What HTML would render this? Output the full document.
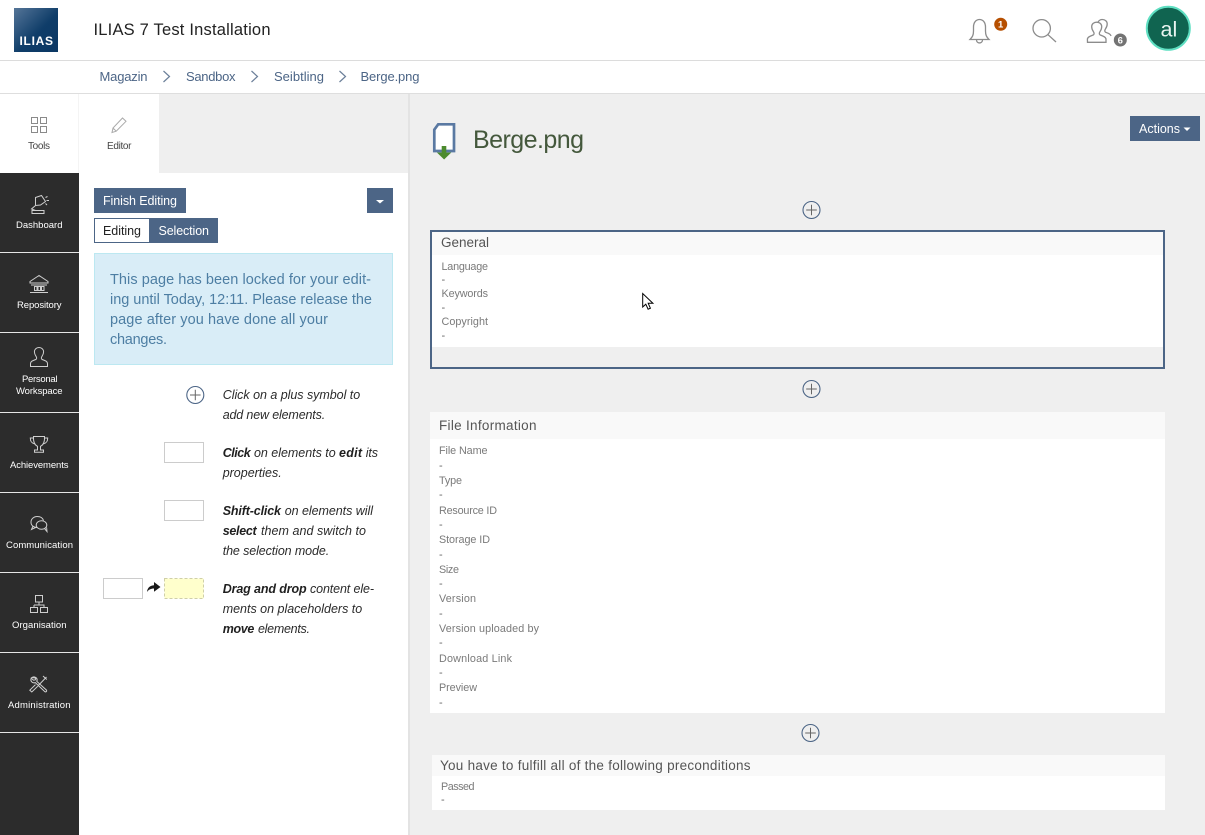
<!DOCTYPE html>
<html lang="en">
<head>
<meta charset="utf-8">
<title>Berge.png</title>
<style>
html,body{margin:0;padding:0;background:#efefef;width:1205px;height:835px;overflow:hidden}
svg{display:block;position:absolute;left:0;top:0}
text{font-family:"Liberation Sans",sans-serif;white-space:pre}
.crumb{font-size:13px;fill:#4c6586}
.nav{font-size:9.5px;fill:#fff}
.tab{font-size:10px;fill:#444}
.it{font-size:12.5px;font-style:italic;fill:#2b2b2b}
.itb{font-size:12.5px;font-style:italic;font-weight:bold;fill:#1f1f1f}
.info{font-size:14.5px;fill:#4d7ea3}
.btn{font-size:12.5px;fill:#fff}
.h{font-size:13.5px;fill:#555}
.l{font-size:10.8px;fill:#7a7a7a}
.d{font-size:11px;fill:#666}
.ic{fill:none;stroke:#cfcfcf;stroke-width:1}
.hic{fill:none;stroke:#8c8c8c;stroke-width:1.3}
</style>
</head>
<body>
<svg width="1205" height="835" viewBox="0 0 1205 835" xmlns="http://www.w3.org/2000/svg">
<defs>
<linearGradient id="lg" x1="0" y1="0" x2="1" y2="1"><stop offset="0" stop-color="#557598"/><stop offset=".55" stop-color="#0f3d69"/><stop offset="1" stop-color="#0b3763"/></linearGradient>
</defs>
<rect width="1205" height="835" fill="#efefef"/>

<!-- header -->
<rect width="1205" height="60" fill="#fff"/>
<rect y="60" width="1205" height="1" fill="#dcdcdc"/>
<rect y="61" width="1205" height="32" fill="#fff"/>
<rect y="93" width="1205" height="1" fill="#dedede"/>
<rect x="14" y="8" width="44" height="44" fill="url(#lg)"/>
<text x="19.5" y="45" font-size="12" font-weight="bold" fill="#fff" textLength="33.5">ILIAS</text>
<text x="93.5" y="35" font-size="16.5" fill="#222" textLength="177">ILIAS 7 Test Installation</text>

<!-- bell -->
<path class="hic" d="M970 39.500h19c-2.500-2.500-3.500-4.500-3.500-8.500v-4c0-4.500-2.500-7.500-6-7.500s-6 3-6 7.500v4c0 4-1 6-3.500 8.500zM976.500 39.700c0 4.300 6 4.300 6 0"/>
<circle cx="1000.700" cy="24.300" r="6.500" fill="#b64f00"/>
<text x="1000.700" y="27.700" font-size="9.500" font-weight="bold" fill="#fff" text-anchor="middle">1</text>
<!-- search -->
<circle class="hic" cx="1041.700" cy="28.300" r="8.700"/>
<path class="hic" d="M1048 34.700l8 7.300"/>
<!-- users -->
<path class="hic" d="M1087.500 42.300h18.500v-2.800c0-1.800-1-2.600-3-3.400l-3-1.200c-.8-.6-.8-2 0-3.300 1.200-1.700 1.700-3.400 1.700-5 0-2.600-2.200-4.400-5-4.400s-5 1.800-5 4.400c0 1.600.5 3.300 1.700 5 .8 1.300.8 2.700 0 3.300l-3 1.200c-2 .8-3 1.600-3 3.400z"/>
<path class="hic" d="M1098 22c1-1.600 2.600-2.500 4.300-2.500 2.800 0 4.900 1.800 4.900 4.400 0 1.600-.5 3.300-1.700 5-.8 1.300-.8 2.700 0 3.300l2.800 1.100c1.300.6 2.400 1.400 2.700 2.700"/>
<circle cx="1120.300" cy="40" r="6.500" fill="#737373"/>
<text x="1120.300" y="43.400" font-size="9.500" font-weight="bold" fill="#fff" text-anchor="middle">6</text>
<!-- avatar -->
<circle cx="1168.300" cy="28.300" r="21.500" fill="#106450" stroke="#5fdfc2" stroke-width="2"/>
<text x="1160.500" y="36.500" font-size="21.500" fill="#e8f4f0">al</text>

<!-- breadcrumb -->
<text class="crumb" x="99.500" y="81" textLength="48">Magazin</text>
<path d="M163.500 71l6 5.500-6 5.500" fill="none" stroke="#6b7f99" stroke-width="1.200"/>
<text class="crumb" x="186" y="81" textLength="49.500">Sandbox</text>
<path d="M251.500 71l6 5.500-6 5.500" fill="none" stroke="#6b7f99" stroke-width="1.200"/>
<text class="crumb" x="274" y="81" textLength="50">Seibtling</text>
<path d="M339.500 71l6 5.500-6 5.500" fill="none" stroke="#6b7f99" stroke-width="1.200"/>
<text class="crumb" x="360.500" y="81" textLength="59">Berge.png</text>

<!-- slate -->
<rect x="79" y="94" width="330" height="741" fill="#fff"/>
<rect x="159" y="94" width="249" height="79" fill="#efefef"/>
<rect x="408" y="94" width="2" height="741" fill="#e3e3e3"/>
<rect x="0" y="94" width="79" height="79" fill="#fff"/>
<rect x="78" y="94" width="1" height="741" fill="#f4f4f4"/>
<rect x="0" y="173" width="79" height="662" fill="#2c2c2c"/>

<!-- tools tab -->
<g fill="none" stroke="#8a8a8a" stroke-width="1">
<rect x="31.500" y="117.500" width="6" height="6"/><rect x="40.500" y="117.500" width="6" height="6"/>
<rect x="31.500" y="126.500" width="6" height="6"/><rect x="40.500" y="126.500" width="6" height="6"/>
</g>
<text class="tab" x="28" y="149" textLength="22">Tools</text>
<path d="M112 132.500l1-4.500 9.500-10 3.500 3.300-9.800 9.900zM113 128l3.200 3.200" fill="none" stroke="#aaa" stroke-width="1"/>
<text class="tab" x="107" y="149" textLength="24.500">Editor</text>

<!-- main nav separators -->
<g fill="#e6e6e6">
<rect y="252" width="79" height="1"/><rect y="332" width="79" height="1"/><rect y="412" width="79" height="1"/>
<rect y="492" width="79" height="1"/><rect y="572" width="79" height="1"/><rect y="652" width="79" height="1"/><rect y="732" width="79" height="1"/>
</g>
<!-- dashboard -->
<path class="ic" d="M35.500 197.500l6-2 4 6-5 3.500-5 .5zM35.500 205.500l-4 3.500 4 1.500M32 210.500h12v3H32zM45.500 197.500l2-1M46.500 200.500h2.500M45.500 203.500l1.500 1.500"/>
<text class="nav" x="16" y="228" textLength="46.500">Dashboard</text>
<!-- repository -->
<path class="ic" d="M39 275.500l-9 6v1.500h18v-1.500zM31 285h16M34.500 286.500h2.500v4h-2.500zM38 286.500h2.500v4H38zM41.500 286.500H44v4h-2.500zM30 292.500h18"/>
<text class="nav" x="17" y="308" textLength="44.500">Repository</text>
<!-- personal -->
<path class="ic" d="M30.500 366.500h17v-2.800c0-1.700-1-2.500-2.800-3.200l-2.700-1.100c-.8-.6-.8-1.900 0-3.100 1.100-1.600 1.600-3.100 1.600-4.500 0-2.500-2-4.300-4.600-4.300s-4.600 1.800-4.600 4.300c0 1.400.5 2.900 1.600 4.500.8 1.200.8 2.500 0 3.100l-2.700 1.100c-1.800.7-2.800 1.500-2.800 3.200z"/>
<text class="nav" x="22" y="382" textLength="35.500">Personal</text>
<text class="nav" x="16" y="394" textLength="46.500">Workspace</text>
<!-- trophy -->
<path class="ic" d="M33.500 436.500h11c.3 5-1.200 8.500-4 9.800v3.700h3v2.300h-9V450h3v-3.700c-2.800-1.300-4.300-4.800-4-9.800zM33.500 438h-3.200c0 3.500 1.200 5 4.200 5.800M44.500 438h3.200c0 3.500-1.200 5-4.200 5.800"/>
<text class="nav" x="10" y="468" textLength="58.500">Achievements</text>
<!-- communication -->
<path class="ic" d="M37 527.500c-3.500 0-6-2.200-6-5.300 0-3.300 2.800-5.700 6.300-5.700 3 0 5.400 1.500 6.200 4M33 526l-1.500 3.500 4-2"/>
<ellipse class="ic" cx="41.500" cy="525" rx="5.300" ry="4.300"/>
<path class="ic" d="M44.500 528.500l2.500 3-.4-4"/>
<text class="nav" x="6" y="548" textLength="67">Communication</text>
<!-- organisation -->
<path class="ic" d="M35.500 595.500h7v6.500h-7zM39 602v3M34 605h10v2M34 605v2M30.500 607.500h7v5h-7zM40.500 607.500h7v5h-7z"/>
<text class="nav" x="12" y="628" textLength="54.500">Organisation</text>
<!-- administration -->
<path class="ic" d="M32 677.500c1.800-1 3.600-.6 4.500.6.800 1.100.8 2.300.3 3.300l9.700 8.700c.6.900-.6 2.300-1.600 1.600l-9.600-9.100c-1.100.4-2.400.3-3.400-.6-1-1-1.300-2.500-.7-3.800l2.400 2 1.700-.4.400-1.700zM46.500 677l-9 9.400M43 676l3.800 3.500M37.500 686.500l-5.700 5.500-2-1.800 5.700-5.600"/>
<text class="nav" x="8" y="708" textLength="62.500">Administration</text>

<!-- slate buttons -->
<rect x="94" y="188" width="92" height="25" fill="#4c6586"/>
<text class="btn" x="103" y="205" textLength="74">Finish Editing</text>
<rect x="367" y="188" width="26" height="25" fill="#4c6586"/>
<path d="M376 200h8l-4 3.500z" fill="#fff"/>
<rect x="94.500" y="218.500" width="55" height="24" fill="#fff" stroke="#4c6586"/>
<rect x="149" y="218" width="69" height="25" fill="#4c6586"/>
<text class="btn" x="103" y="235" textLength="38" style="fill:#222">Editing</text>
<text class="btn" x="158.500" y="235" textLength="50.500">Selection</text>

<!-- info -->
<rect x="94.500" y="253.500" width="298" height="111" fill="#d9edf7" stroke="#bce8f1"/>
<text class="info" x="110" y="284" textLength="261">This page has been locked for your edit-</text>
<text class="info" x="110" y="304" textLength="262">ing until Today, 12:11. Please release the</text>
<text class="info" x="110" y="324" textLength="218">page after you have done all your</text>
<text class="info" x="110" y="344" textLength="57">changes.</text>

<!-- help -->
<circle cx="195.300" cy="395" r="8.500" fill="none" stroke="#4c6586" stroke-width="1.100"/>
<path d="M190 395h10.600M195.300 389.700v10.600" stroke="#666" stroke-width="1" fill="none"/>
<text class="it" x="222.700" y="399" textLength="137.500">Click on a plus symbol to</text>
<text class="it" x="222.700" y="419" textLength="102.500">add new elements.</text>

<rect x="164.500" y="442.500" width="39" height="20" fill="#fff" stroke="#ccc"/>
<text class="itb" x="222.700" y="457" textLength="28">Click</text>
<text class="it" x="254" y="457" textLength="81.700">on elements to</text>
<text class="itb" x="339" y="457" textLength="23">edit</text>
<text class="it" x="365.700" y="457" textLength="12.300">its</text>
<text class="it" x="222.700" y="477" textLength="59">properties.</text>

<rect x="164.500" y="500.500" width="39" height="20" fill="#fff" stroke="#ccc"/>
<text class="itb" x="222.700" y="515" textLength="58.300">Shift-click</text>
<text class="it" x="284.700" y="515" textLength="88.300">on elements will</text>
<text class="itb" x="222.700" y="535" textLength="34">select</text>
<text class="it" x="261" y="535" textLength="105">them and switch to</text>
<text class="it" x="222.700" y="555" textLength="106.500">the selection mode.</text>

<rect x="103.500" y="578.500" width="39" height="20" fill="#fff" stroke="#ccc"/>
<path d="M147 592c.3-4 2.600-6.500 7-6.800V582l6.500 5-6.500 4.700v-3.200c-3 0-5.300 1-7 3.500z" fill="#1a1a1a"/>
<rect x="164.500" y="578.500" width="39" height="20" fill="#ffffcc" stroke="#cfcfa8" stroke-dasharray="3 2"/>
<text class="itb" x="222.700" y="593" textLength="84">Drag and drop</text>
<text class="it" x="310" y="593" textLength="64">content ele-</text>
<text class="it" x="222.700" y="613" textLength="139.500">ments on placeholders to</text>
<text class="itb" x="222.700" y="633" textLength="31.600">move</text>
<text class="it" x="258" y="633" textLength="52">elements.</text>

<!-- title -->
<path d="M438.200 124.300h15.800v26.700h-19.700v-21.300z" fill="#fff" stroke="#5a79a2" stroke-width="2.700"/>
<path d="M441.700 146h4.600v6.500h5l-7.200 7-7.200-7h4.800z" fill="#4c8a2e"/>
<text x="473" y="148" font-size="25" fill="#44583c" textLength="111">Berge.png</text>

<!-- actions -->
<rect x="1130" y="116" width="70" height="25" fill="#4c6586"/>
<text class="btn" x="1139" y="133" textLength="41">Actions</text>
<path d="M1183.500 127.500h7l-3.500 3.500z" fill="#fff"/>

<!-- plus icons -->
<g fill="none">
<circle cx="811.500" cy="210" r="8.500" stroke="#4c6586" stroke-width="1.100"/><path d="M806.200 210h10.600M811.500 204.700v10.600" stroke="#666"/>
<circle cx="811.500" cy="389" r="8.500" stroke="#4c6586" stroke-width="1.100"/><path d="M806.200 389h10.600M811.500 383.700v10.600" stroke="#666"/>
<circle cx="810.500" cy="733" r="8.500" stroke="#4c6586" stroke-width="1.100"/><path d="M805.200 733h10.600M810.500 727.700v10.600" stroke="#666"/>
</g>

<!-- General -->
<rect x="432" y="232" width="731" height="23" fill="#f9f9f9"/>
<rect x="432" y="255" width="731" height="92" fill="#fff"/>
<rect x="431" y="231" width="733" height="137" fill="none" stroke="#4c6586" stroke-width="2"/>
<text class="h" x="441" y="247" textLength="48">General</text>
<text class="l" x="441.500" y="270" textLength="46.500">Language</text>
<text class="d" x="441.500" y="283">-</text>
<text class="l" x="441.500" y="297" textLength="46.500">Keywords</text>
<text class="d" x="441.500" y="311">-</text>
<text class="l" x="441.500" y="325" textLength="46.500">Copyright</text>
<text class="d" x="441.500" y="339">-</text>

<!-- File Information -->
<rect x="430" y="412" width="735" height="27" fill="#f9f9f9"/>
<rect x="430" y="439" width="735" height="274" fill="#fff"/>
<text class="h" x="439" y="430" textLength="97.500">File Information</text>
<text class="l" x="439" y="454" textLength="48.500">File Name</text><text class="d" x="439" y="469">-</text>
<text class="l" x="439" y="484" textLength="23">Type</text><text class="d" x="439" y="498">-</text>
<text class="l" x="439" y="514" textLength="58">Resource ID</text><text class="d" x="439" y="528">-</text>
<text class="l" x="439" y="543" textLength="51">Storage ID</text><text class="d" x="439" y="558">-</text>
<text class="l" x="439" y="573" textLength="20">Size</text><text class="d" x="439" y="587">-</text>
<text class="l" x="439" y="602" textLength="37">Version</text><text class="d" x="439" y="617">-</text>
<text class="l" x="439" y="632" textLength="100">Version uploaded by</text><text class="d" x="439" y="646">-</text>
<text class="l" x="439" y="662" textLength="73">Download Link</text><text class="d" x="439" y="676">-</text>
<text class="l" x="439" y="691" textLength="38">Preview</text><text class="d" x="439" y="706">-</text>

<!-- Preconditions -->
<rect x="432" y="755" width="733" height="21" fill="#f9f9f9"/>
<rect x="432" y="776" width="733" height="34" fill="#fff"/>
<text class="h" x="440" y="770" textLength="310.500">You have to fulfill all of the following preconditions</text>
<text class="l" x="441" y="790" textLength="33.500">Passed</text>
<text class="d" x="441" y="803">-</text>

<!-- cursor -->
<path d="M642.700 293.500V307l3.100-2.800 2.300 5 2.300-1-2.200-4.900h4.700z" fill="#fff" stroke="#000" stroke-width="1"/>
</svg>
</body>
</html>
